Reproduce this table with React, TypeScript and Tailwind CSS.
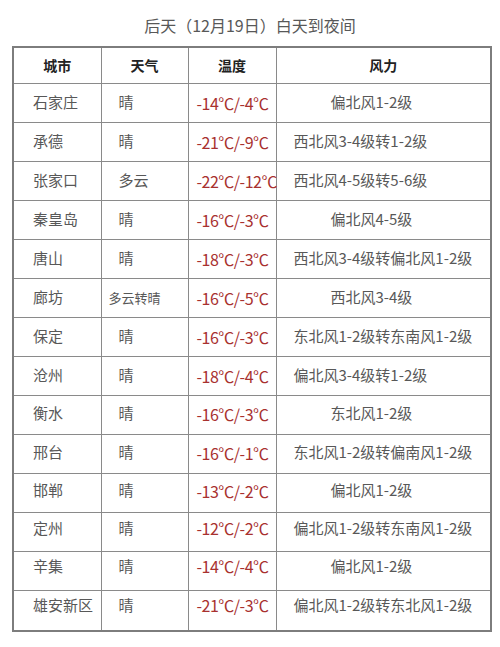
const rows = [
  { city: "石家庄", weather: "晴", temp: "-14℃/-4℃", wind: "偏北风1-2级", wide: false, shift: "" },
  { city: "承德", weather: "晴", temp: "-21℃/-9℃", wind: "西北风3-4级转1-2级", wide: true, shift: "" },
  { city: "张家口", weather: "多云", temp: "-22℃/-12℃", wind: "西北风4-5级转5-6级", wide: true, shift: "" },
  { city: "秦皇岛", weather: "晴", temp: "-16℃/-3℃", wind: "偏北风4-5级", wide: false, shift: "" },
  { city: "唐山", weather: "晴", temp: "-18℃/-3℃", wind: "西北风3-4级转偏北风1-2级", wide: true, shift: "" },
  { city: "廊坊", weather: "多云转晴", temp: "-16℃/-5℃", wind: "西北风3-4级", wide: false, shift: "" },
  { city: "保定", weather: "晴", temp: "-16℃/-3℃", wind: "东北风1-2级转东南风1-2级", wide: true, shift: "" },
  { city: "沧州", weather: "晴", temp: "-18℃/-4℃", wind: "偏北风3-4级转1-2级", wide: true, shift: "" },
  { city: "衡水", weather: "晴", temp: "-16℃/-3℃", wind: "东北风1-2级", wide: false, shift: "pb-[2px]" },
  { city: "邢台", weather: "晴", temp: "-16℃/-1℃", wind: "东北风1-2级转偏南风1-2级", wide: true, shift: "pb-[2px]" },
  { city: "邯郸", weather: "晴", temp: "-13℃/-2℃", wind: "偏北风1-2级", wide: false, shift: "pb-[4px]" },
  { city: "定州", weather: "晴", temp: "-12℃/-2℃", wind: "偏北风1-2级转东南风1-2级", wide: true, shift: "pb-[7px]" },
  { city: "辛集", weather: "晴", temp: "-14℃/-4℃", wind: "偏北风1-2级", wide: false, shift: "pb-[9px]" },
  { city: "雄安新区", weather: "晴", temp: "-21℃/-3℃", wind: "偏北风1-2级转东北风1-2级", wide: true, shift: "pb-[10px]" },
];

export default function App() {
  return (
    <div className="w-[500px] h-[647px] bg-white font-['Noto_Sans_CJK_SC',sans-serif] text-[#585858]">
      <div className="h-[46px] pt-[4px] flex items-center justify-center text-[16px] text-[#585858]">
        后天（12月19日）白天到夜间
      </div>
      <table className="ml-[12px] border-collapse border-2 border-[#7d7d7d] table-fixed w-[478px]">
        <colgroup>
          <col className="w-[88px]" />
          <col className="w-[87px]" />
          <col className="w-[88px]" />
          <col className="w-[215px]" />
        </colgroup>
        <thead>
          <tr className="h-[36px] text-[14px] font-bold text-[#222]">
            <th className="border border-[#8a8a8a] text-center">城市</th>
            <th className="border border-[#8a8a8a] text-center">天气</th>
            <th className="border border-[#8a8a8a] text-center">温度</th>
            <th className="border border-[#8a8a8a] text-center">风力</th>
          </tr>
        </thead>
        <tbody>
          {rows.map((r, i) => (
            <tr key={i} className={i === rows.length - 1 ? "h-[41px]" : "h-[39px]"}>
              <td className={`border border-[#8a8a8a] pl-[19px] text-[15px] whitespace-nowrap ${r.shift}`}>
                {r.city}
              </td>
              <td
                className={`border border-[#8a8a8a] whitespace-nowrap ${r.shift} ${
                  r.weather === "多云转晴" ? "pl-[7px] text-[13px]" : "pl-[17px] text-[15px]"
                }`}
              >
                {r.weather}
              </td>
              <td className={`border border-[#8a8a8a] pl-[8px] text-[16px] text-[#a8312f] whitespace-nowrap overflow-visible tracking-[-0.5px] ${r.shift}`}>
                {r.temp}
              </td>
              <td
                className={`border border-[#8a8a8a] text-[15px] whitespace-nowrap ${r.shift} ${
                  r.wide ? "pl-[17px]" : "pl-[54px]"
                }`}
              >
                {r.wind}
              </td>
            </tr>
          ))}
        </tbody>
      </table>
    </div>
  );
}
